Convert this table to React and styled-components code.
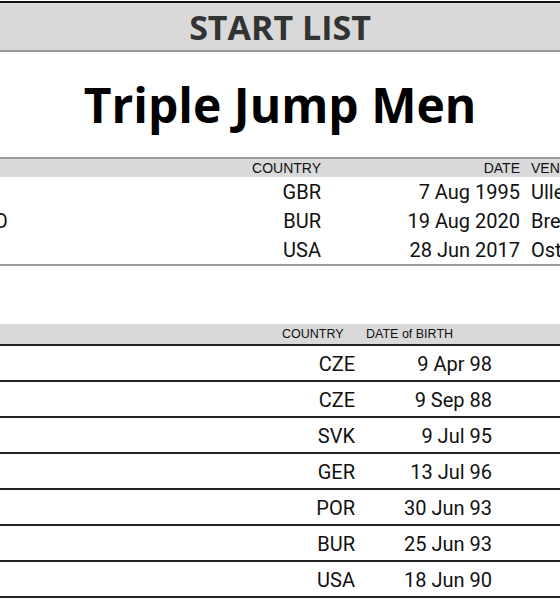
import React from 'react'
import styled, { createGlobalStyle } from 'styled-components'

// the page is wider than the window: it is cut on both sides
const GlobalStyle = createGlobalStyle`
    html, body {
        margin: 0;
        padding: 0;
        background: #fff;
        overflow: hidden;
    }
    body {
        font-family: Roboto, "Liberation Sans", sans-serif;
        color: #111;
    }
`

const headGrey = '#d9d9d9'

const Sheet = styled.div`
    width: 1200px;
    margin-left: -320px;
    padding-top: 1px;
`

const Banner = styled.header`
    display: flex;
    align-items: center;
    justify-content: center;
    height: 47px;
    border-top: 2px solid #111;
    border-bottom: 2px solid #9a9a9a;
    background-color: ${headGrey};
    font-family: "Open Sans", sans-serif;
    font-weight: 700;
    font-size: 34px;
    color: #333;
`

const EventTitle = styled.h1`
    display: flex;
    align-items: center;
    justify-content: center;
    height: 105px;
    margin: 0;
    font-family: "Open Sans", sans-serif;
    font-weight: 700;
    font-size: 48px;
    color: #000;
`

// records table
const recordCols = '50px 67px 424px 100px 199px 1fr'

const RecordTable = styled.section`
    border-top: 2px solid #9a9a9a;
    border-bottom: 2px solid #9a9a9a;
`

const RecordHead = styled.div`
    display: grid;
    grid-template-columns: ${recordCols};
    align-items: center;
    height: 18px;
    background-color: ${headGrey};
    font-family: "Liberation Sans", Arial, sans-serif;
    font-size: 14px;
    color: #111;
`

const RecordRow = styled.div`
    display: grid;
    grid-template-columns: ${recordCols};
    align-items: center;
    height: 29px;
    font-size: 20px;
`

const Cell = styled.div`
    white-space: nowrap;
    overflow: hidden;
    text-align: ${p => p.$align || 'left'};
    padding-left: ${p => p.$pl || 0}px;
    padding-right: ${p => p.$pr || 0}px;
`

// start list table: the PB column lies past the right edge
const startCols = '30px 40px 532px 84px 130px 110px 1fr'

const StartTable = styled.section`
    margin-top: 58px;
`

const StartHead = styled.div`
    display: grid;
    grid-template-columns: ${startCols};
    align-items: center;
    height: 20px;
    background-color: ${headGrey};
    border-bottom: 2px solid #222;
    font-family: "Liberation Sans", Arial, sans-serif;
    font-size: 12.5px;
`

const StartRow = styled.div`
    display: grid;
    grid-template-columns: ${startCols};
    align-items: center;
    height: 32px;
    padding-top: 2px;
    border-bottom: 2px solid #222;
    font-size: 20px;
`

const records = [
    { type: 'WR', mark: '18.29', name: 'Jonathan EDWARDS', country: 'GBR', date: '7 Aug 1995', venue: 'Ullevi, Göteborg' },
    { type: 'WL', mark: '17.43', name: 'Hugues Fabrice ZANGO', country: 'BUR', date: '19 Aug 2020', venue: 'Brežice' },
    { type: 'MR', mark: '17.57', name: 'Christian TAYLOR', country: 'USA', date: '28 Jun 2017', venue: 'Ostrava' },
]

const athletes = [
    { order: 1, bib: 101, name: 'Jiří VONDRÁČEK', country: 'CZE', dob: '9 Apr 98', pb: '16.52' },
    { order: 2, bib: 102, name: 'Tomáš KOVÁŘ', country: 'CZE', dob: '9 Sep 88', pb: '16.61' },
    { order: 3, bib: 103, name: 'Tomáš VESZELKA', country: 'SVK', dob: '9 Jul 95', pb: '16.95' },
    { order: 4, bib: 104, name: 'Max HESS', country: 'GER', dob: '13 Jul 96', pb: '17.52' },
    { order: 5, bib: 105, name: 'Pedro PICHARDO', country: 'POR', dob: '30 Jun 93', pb: '18.08' },
    { order: 6, bib: 106, name: 'Hugues ZANGO', country: 'BUR', dob: '25 Jun 93', pb: '17.77' },
    { order: 7, bib: 107, name: 'Christian TAYLOR', country: 'USA', dob: '18 Jun 90', pb: '18.21' },
]

const App = () => (
    <>
        <GlobalStyle />
        <Sheet>
            <Banner>START LIST</Banner>
            <EventTitle>Triple Jump Men</EventTitle>

            <RecordTable>
                <RecordHead>
                    <Cell />
                    <Cell />
                    <Cell>NAME</Cell>
                    <Cell $align="right">COUNTRY</Cell>
                    <Cell $align="right">DATE</Cell>
                    <Cell $pl={11}>VENUE</Cell>
                </RecordHead>
                {records.map(r => (
                    <RecordRow key={r.type}>
                        <Cell $pl={6}>{r.type}</Cell>
                        <Cell>{r.mark}</Cell>
                        <Cell>{r.name}</Cell>
                        <Cell $align="right">{r.country}</Cell>
                        <Cell $align="right">{r.date}</Cell>
                        <Cell $pl={11}>{r.venue}</Cell>
                    </RecordRow>
                ))}
            </RecordTable>

            <StartTable>
                <StartHead>
                    <Cell />
                    <Cell>BIB</Cell>
                    <Cell>NAME</Cell>
                    <Cell>COUNTRY</Cell>
                    <Cell>DATE of BIRTH</Cell>
                    <Cell />
                    <Cell>PB</Cell>
                </StartHead>
                {athletes.map(a => (
                    <StartRow key={a.order}>
                        <Cell $align="right">{a.order}</Cell>
                        <Cell $align="right" $pr={8}>{a.bib}</Cell>
                        <Cell $pl={4}>{a.name}</Cell>
                        <Cell $align="right" $pr={11}>{a.country}</Cell>
                        <Cell $align="right" $pr={4}>{a.dob}</Cell>
                        <Cell />
                        <Cell>{a.pb}</Cell>
                    </StartRow>
                ))}
            </StartTable>
        </Sheet>
    </>
)

export default App
